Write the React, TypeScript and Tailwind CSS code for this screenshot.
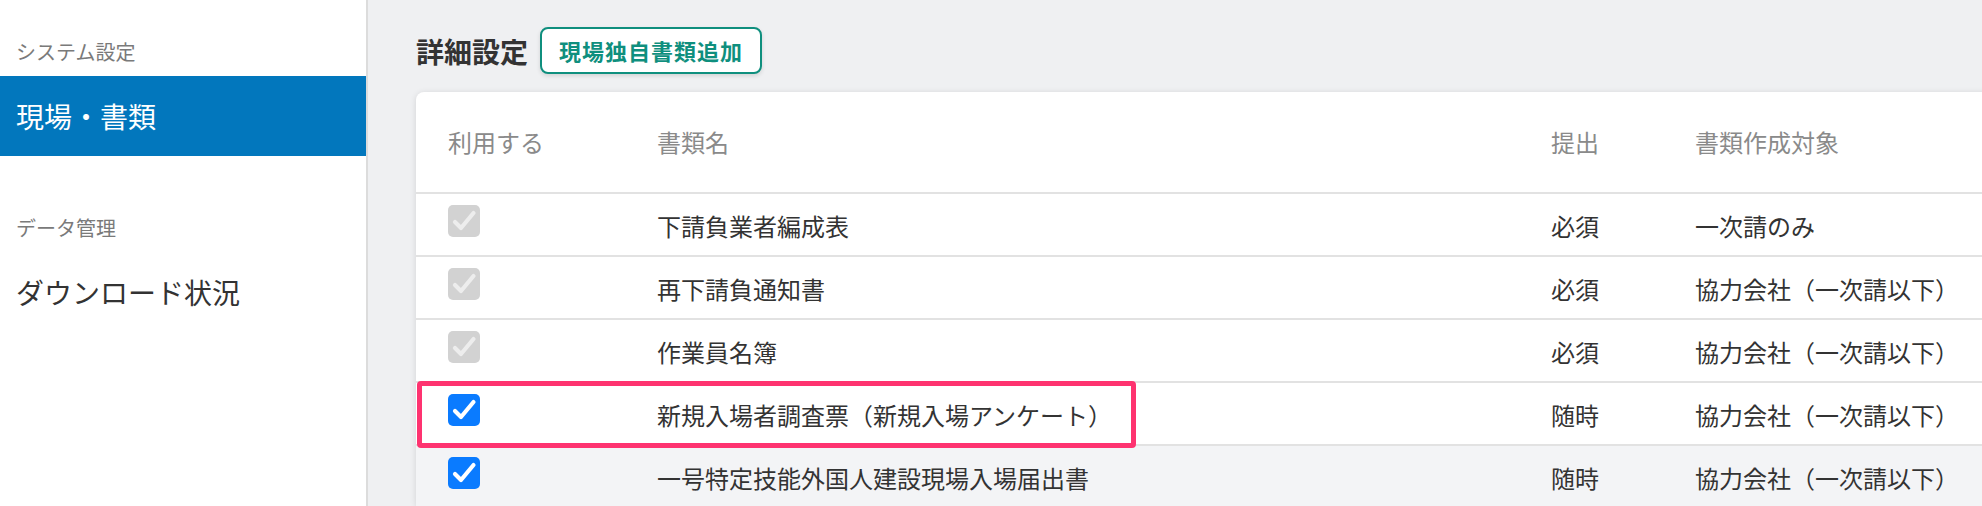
type Doc = {
  name: string;
  submit: string;
  target: string;
  locked?: boolean;
};

const docs: Doc[] = [
  { name: "下請負業者編成表", submit: "必須", target: "一次請のみ", locked: true },
  { name: "再下請負通知書", submit: "必須", target: "協力会社（一次請以下）", locked: true },
  { name: "作業員名簿", submit: "必須", target: "協力会社（一次請以下）", locked: true },
  { name: "新規入場者調査票（新規入場アンケート）", submit: "随時", target: "協力会社（一次請以下）" },
  { name: "一号特定技能外国人建設現場入場届出書", submit: "随時", target: "協力会社（一次請以下）" },
];

const CheckBox = ({ locked }: { locked?: boolean }) => (
  <div
    className={`w-[32px] h-[32px] rounded-[5px] flex items-center justify-center ${
      locked ? "bg-[#d2d2d2]" : "bg-[#0a7bff]"
    }`}
  >
    <svg width="32" height="32" viewBox="0 0 32 32" fill="none">
      <path
        d="M7 17 L13 23 L25.5 8"
        stroke={locked ? "#ededed" : "#ffffff"}
        strokeWidth="4.2"
        strokeLinecap="round"
        strokeLinejoin="round"
      />
    </svg>
  </div>
);

const Sidebar = () => (
  <aside className="w-[368px] shrink-0 h-full bg-white border-r-2 border-[#dcdcdc]">
    <p className="pt-[38px] px-[16px] text-[20px] leading-[28px] text-[#7a7a7a]">
      システム設定
    </p>
    <div className="mt-[10px] h-[80px] bg-[#0277bd] flex items-center px-[16px]">
      <span className="text-[28px] text-white">現場・書類</span>
    </div>
    <p className="mt-[58px] px-[16px] text-[20px] leading-[28px] text-[#7a7a7a]">
      データ管理
    </p>
    <p className="mt-[30px] px-[16px] text-[28px] leading-[40px] text-[#333333]">
      ダウンロード状況
    </p>
  </aside>
);

export default function App() {
  return (
    <div
      className="flex h-[506px] w-full overflow-hidden bg-[#eff0f2]"
      style={{ fontFamily: '"Noto Sans CJK JP", "Noto Sans", sans-serif' }}
    >
      <Sidebar />

      <main className="flex-1 min-w-0 overflow-hidden pl-[48px] pt-[27px]">
        {/* Heading */}
        <div className="flex items-center gap-[12px]">
          <h1 className="text-[28px] font-bold text-[#333333] leading-[40px]">
            詳細設定
          </h1>
          <button className="h-[47px] px-[17px] bg-white border-2 border-[#0f8f7e] rounded-[8px] shadow-[0_2px_4px_rgba(0,0,0,0.12)] text-[22px] font-bold tracking-[1px] text-[#0f8f7e]">
            現場独自書類追加
          </button>
        </div>

        {/* Table card */}
        <div className="relative mt-[18px] w-[1660px] bg-white rounded-[8px] shadow-[0_1px_6px_rgba(0,0,0,0.12)]">
          <div className="grid grid-cols-[241px_894px_144px_1fr] h-[102px] items-center border-b-2 border-[#e2e2e2] text-[24px] text-[#8a8a8a]">
            <span className="pl-[32px]">利用する</span>
            <span>書類名</span>
            <span>提出</span>
            <span>書類作成対象</span>
          </div>

          {docs.map((d, i) => (
            <div
              key={i}
              className={`grid grid-cols-[241px_894px_144px_1fr] h-[63px] border-b-2 border-[#e2e2e2] text-[24px] text-[#333333] ${
                i === 4 ? "bg-[#f3f4f6]" : ""
              }`}
            >
              <div className="pl-[32px] pt-[11px]">
                <CheckBox locked={d.locked} />
              </div>
              <span className="mt-[14px] leading-[36px]">{d.name}</span>
              <span className="mt-[14px] leading-[36px]">{d.submit}</span>
              <span className="mt-[14px] leading-[36px]">{d.target}</span>
            </div>
          ))}

          {/* highlight annotation */}
          <div className="absolute left-[1px] top-[289px] w-[719px] h-[67px] border-[5px] border-[#fe3370] rounded-[4px] pointer-events-none" />
        </div>
      </main>
    </div>
  );
}
